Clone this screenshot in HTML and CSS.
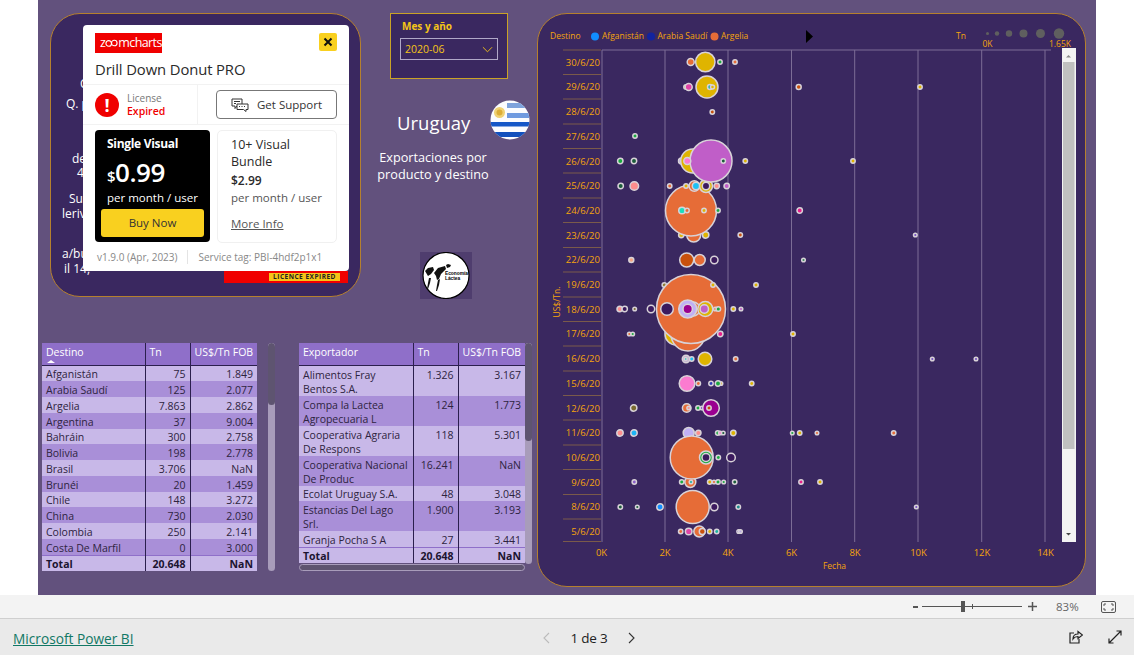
FILE: index.html
```html
<!DOCTYPE html>
<html lang="es">
<head>
    <meta charset="UTF-8">
    <title>Uruguay - Microsoft Power BI</title>
    <link rel="stylesheet" href="styles.css">
</head>
<body>
    <div class="report">
        <div class="left">
            <div class="top">
                <div class="panel info">
                    <div class="intro">
                        <div class="l1">C</div>
                        <div class="l2">Q. p</div>
                        <div class="l3">de</div>
                        <div class="l4">4</div>
                        <div class="l5">Su</div>
                        <div class="l6">leriv</div>
                        <div class="l7">a/bu</div>
                        <div class="l8">il 14,</div>
                    </div>
                    <div class="expired-strip"><span class="expired-tag">LICENCE EXPIRED</span></div>

                    <div class="popup">
                        <div class="popup-head">
                            <div class="logo">z<svg class="logo-gear" viewBox="0 0 14 10"><circle cx="4" cy="5.500" r="3" /><circle cx="10" cy="5" r="3" /></svg>mcharts<span class="logo-cut">S</span></div>
                            <div class="close"><svg viewBox="0 0 10 10"><path d="M1.5 1.5l7 7M8.5 1.5l-7 7" /></svg></div>
                        </div>
                        <div class="popup-title">Drill Down Donut PRO</div>
                        <div class="license-row">
                            <div class="license">
                                <div class="alert">!</div>
                                <div class="license-text">License<br><span class="license-red">Expired</span></div>
                            </div>
                            <div class="support-wrap">
                                <div class="support">
                                    <svg viewBox="0 0 18 14"><path d="M1 1h10v7H6l-2 2.500V8H1z" /><path d="M6 6h11v5.500h-2v2l-2.500-2H6z" /><path d="M3 3.500h6M3 5.500h2M8 8.500h1M10.500 8.500h1M13 8.500h1" /></svg>
                                    Get Support
                                </div>
                            </div>
                        </div>
                        <div class="offers">
                            <div class="offer-black">
                                <div class="offer-name">Single Visual</div>
                                <div class="offer-price"><span class="dollar">$</span>0.99</div>
                                <div class="offer-per">per month / user</div>
                                <div class="buy">Buy Now</div>
                            </div>
                            <div class="offer-white">
                                <div class="bundle-name">10+ Visual<br>Bundle</div>
                                <div class="bundle-price">$2.99</div>
                                <div class="bundle-per">per month / user</div>
                                <div class="more">More Info</div>
                            </div>
                        </div>
                        <div class="popup-foot">
                            <span>v1.9.0 (Apr, 2023)</span>
                            <span class="foot-sep"></span>
                            <span>Service tag: PBI-4hdf2p1x1</span>
                        </div>
                    </div>
                </div>

                <div class="middle">
                    <div class="slicer">
                        <div class="slicer-label">Mes y año</div>
                        <div class="slicer-select">
                            2020-06
                            <svg viewBox="0 0 12 7"><path d="M1 1l5 5 5-5" /></svg>
                        </div>
                    </div>
                    <div class="country">
                        <div class="country-name">Uruguay</div>
                        <svg class="flag" viewBox="0 0 40 40">
                            <defs>
                                <clipPath id="flagClip"><circle cx="20" cy="20" r="19.500" /></clipPath>
                            </defs>
                            <g clip-path="url(#flagClip)">
                                <rect width="40" height="40" fill="#fbfcff" />
                                <rect x="17" y="3" width="23" height="5" fill="#7ea3dc" />
                                <rect x="17" y="13" width="23" height="5" fill="#6f9ae0" />
                                <rect y="22" width="40" height="4.500" fill="#1557c8" />
                                <rect y="32" width="40" height="5" fill="#1250bd" />
                                <circle cx="9.500" cy="12.500" r="5.500" fill="#f0d274" />
                                <circle cx="9.500" cy="12.500" r="3" fill="#dcae38" />
                            </g>
                        </svg>
                    </div>
                    <div class="subtitle">Exportaciones por<br>producto y destino</div>
                    <div class="cow-logo">
                        <svg viewBox="0 0 52 47">
                            <circle cx="26" cy="23.500" r="23" fill="#fff" stroke="#000" stroke-width="1.200" />
                            <path d="M5 19l3-3 5-1 1 3-3 4-3 2z" fill="#111" />
                            <path d="M14 21l4-5 7-2 1 3-5 5-2 5-2 1-1-4z" fill="#111" />
                            <path d="M9 26l2 0-1 5-2 6H7l1-6zM18 28l2-1-1 6-2 6h-1l1-6z" fill="#111" />
                            <path d="M26 13l2-1 3 1-1 2-3 1z" fill="#111" />
                            <text x="25" y="23" class="cow-text">Economía</text>
                            <text x="25" y="28" class="cow-text">Láctea</text>
                        </svg>
                    </div>
                </div>
            </div>

            <div class="tables">
                <div class="table-wrap table-dest">
                    <table class="grid">
                        <tr class="head">
                            <th class="col-dest">Destino<span class="sort"></span></th>
                            <th class="col-tn">Tn</th>
                            <th class="col-fob">US$/Tn FOB</th>
                        </tr>
                        <tr><td>Afganistán</td><td>75</td><td>1.849</td></tr>
                        <tr><td>Arabia Saudí</td><td>125</td><td>2.077</td></tr>
                        <tr><td>Argelia</td><td>7.863</td><td>2.862</td></tr>
                        <tr><td>Argentina</td><td>37</td><td>9.004</td></tr>
                        <tr><td>Bahráin</td><td>300</td><td>2.758</td></tr>
                        <tr><td>Bolivia</td><td>198</td><td>2.778</td></tr>
                        <tr><td>Brasil</td><td>3.706</td><td>NaN</td></tr>
                        <tr><td>Brunéi</td><td>20</td><td>1.459</td></tr>
                        <tr><td>Chile</td><td>148</td><td>3.272</td></tr>
                        <tr><td>China</td><td>730</td><td>2.030</td></tr>
                        <tr><td>Colombia</td><td>250</td><td>2.141</td></tr>
                        <tr><td>Costa De Marfil</td><td>0</td><td>3.000</td></tr>
                        <tr class="total"><td>Total</td><td>20.648</td><td>NaN</td></tr>
                    </table>
                    <div class="vbar"><div class="vthumb thumb-dest"></div></div>
                </div>

                <div class="table-wrap table-exp">
                    <div class="table-col">
                        <table class="grid">
                            <tr class="head">
                                <th class="col-exp">Exportador</th>
                                <th class="col-tn2">Tn</th>
                                <th class="col-fob2">US$/Tn FOB</th>
                            </tr>
                            <tr class="tall"><td>Alimentos Fray<br>Bentos S.A.</td><td>1.326</td><td>3.167</td></tr>
                            <tr class="tall"><td>Compa la Lactea<br>Agropecuaria L</td><td>124</td><td>1.773</td></tr>
                            <tr class="tall"><td>Cooperativa Agraria<br>De Respons</td><td>118</td><td>5.301</td></tr>
                            <tr class="tall"><td>Cooperativa Nacional<br>De Produc</td><td>16.241</td><td>NaN</td></tr>
                            <tr><td>Ecolat Uruguay S.A.</td><td>48</td><td>3.048</td></tr>
                            <tr class="tall"><td>Estancias Del Lago<br>Srl.</td><td>1.900</td><td>3.193</td></tr>
                            <tr><td>Granja Pocha S A</td><td>27</td><td>3.441</td></tr>
                            <tr class="total"><td>Total</td><td>20.648</td><td>NaN</td></tr>
                        </table>
                        <div class="hbar"></div>
                    </div>
                    <div class="vbar vbar-exp"><div class="vthumb thumb-exp"></div></div>
                </div>
            </div>
        </div>

        <div class="panel chart">
            <svg class="chart-svg" viewBox="537 13 549 574">
                <!-- legend -->
                <text x="550" y="39" class="lbl">Destino</text>
                <circle cx="595" cy="36.500" r="4" fill="#118dff" />
                <text x="602" y="39" class="lbl">Afganistán</text>
                <circle cx="651" cy="36.500" r="4" fill="#12239e" />
                <text x="657.500" y="39" class="lbl">Arabia Saudí</text>
                <circle cx="714.500" cy="36.500" r="4" fill="#e66c37" />
                <text x="721" y="39" class="lbl">Argelia</text>
                <path d="M806 30l7 6.500-7 6.500z" fill="#000" />
                <text x="956" y="39" class="lbl">Tn</text>
                <g fill="#5f5f5f">
                    <circle cx="987.500" cy="33.500" r="1.500" />
                    <circle cx="997" cy="33.500" r="2.200" />
                    <circle cx="1009" cy="33.500" r="3.200" />
                    <circle cx="1023.500" cy="33.500" r="4" />
                    <circle cx="1040.500" cy="33.500" r="4.500" />
                    <circle cx="1059" cy="33.500" r="5.200" />
                </g>
                <text x="982.500" y="47" class="lbl">0K</text>
                <text x="1049" y="47" class="lbl">1.65K</text>

                <!-- grid -->
                <g class="gridline">
                    <path d="M602 50V542M665 50V542M728 50V542M791.500 50V542M854.700 50V542M918 50V542M981.700 50V542M1045 50V542M602 50H1051" />
                </g>
                <g class="tick">
                    <path d="M563 50H601M563 74.500H601M563 99H601M563 124H601M563 148.500H601M563 173H601M563 198H601M563 222.500H601M563 247.500H601M563 272H601M563 297H601M563 321.500H601M563 346H601M563 371H601M563 395.500H601M563 420H601M563 445H601M563 469.500H601M563 494.500H601M563 519H601M563 541.500H601" />
                </g>

                <!-- axis -->
                <g class="date">
                    <text x="600" y="65.500">30/6/20</text>
                    <text x="600" y="90">29/6/20</text>
                    <text x="600" y="115">28/6/20</text>
                    <text x="600" y="139.500">27/6/20</text>
                    <text x="600" y="164.500">26/6/20</text>
                    <text x="600" y="189">25/6/20</text>
                    <text x="600" y="213.500">24/6/20</text>
                    <text x="600" y="238.500">23/6/20</text>
                    <text x="600" y="263">22/6/20</text>
                    <text x="600" y="288">19/6/20</text>
                    <text x="600" y="312.500">18/6/20</text>
                    <text x="600" y="337">17/6/20</text>
                    <text x="600" y="362">16/6/20</text>
                    <text x="600" y="386.500">15/6/20</text>
                    <text x="600" y="411.500">12/6/20</text>
                    <text x="600" y="436">11/6/20</text>
                    <text x="600" y="460.500">10/6/20</text>
                    <text x="600" y="485.500">9/6/20</text>
                    <text x="600" y="510">8/6/20</text>
                    <text x="600" y="534.500">5/6/20</text>
                </g>
                <g class="xaxis">
                    <text x="601.500" y="556">0K</text>
                    <text x="665" y="556">2K</text>
                    <text x="728" y="556">4K</text>
                    <text x="791.500" y="556">6K</text>
                    <text x="855" y="556">8K</text>
                    <text x="918.500" y="556">10K</text>
                    <text x="982" y="556">12K</text>
                    <text x="1045.500" y="556">14K</text>
                </g>
                <text x="834.500" y="569" class="lbl-mid">Fecha</text>
                <text transform="translate(560 302) rotate(-90)" class="lbl-mid">US$/Tn.</text>

                <!-- bubbles, rows drawn so the big ones cover their neighbours -->
                <g class="bubbles">
                    <g transform="translate(0 235)">
                        <circle cx="693.700" r="7" fill="#e66c37" />
                        <circle cx="681.300" r="2.700" fill="#dfb400" />
                        <circle cx="705.700" r="3.200" fill="#dfb400" />
                        <circle cx="740.300" r="2.200" fill="#c9510c" />
                        <circle cx="915.300" r="1.800" fill="#744ec2" />
                    </g>
                    <g transform="translate(0 210.500)">
                        <circle cx="691" r="25.500" fill="#e66c37" />
                        <circle cx="682" r="3.300" fill="#1ae0c0" />
                        <circle cx="687" r="2.200" fill="#e66c37" />
                        <circle cx="704" r="2.200" fill="#dfb400" />
                        <circle cx="718" r="2.200" fill="#1aab40" />
                        <circle cx="799.700" r="2.700" fill="#e91e8c" />
                    </g>
                    <g transform="translate(0 186)">
                        <circle cx="620.700" r="2.700" fill="#1a5c3a" />
                        <circle cx="634.300" r="4.300" fill="#fd8d8d" />
                        <circle cx="669.700" r="2.200" fill="#e66c37" />
                        <circle cx="686" r="2.200" fill="#dfb400" />
                        <circle cx="694.300" r="5.200" fill="#e66c37" />
                        <circle cx="696" r="3.700" fill="#1cc1f5" />
                        <circle cx="706" r="6.500" fill="#dfb400" />
                        <circle cx="706" r="3.700" fill="#3b1a5e" />
                        <circle cx="716.700" r="2.700" fill="#fd8d8d" />
                        <circle cx="726.700" r="2.700" fill="#c05ec8" />
                    </g>
                    <g transform="translate(0 161)">
                        <circle cx="620.300" r="2.700" fill="#1aab40" />
                        <circle cx="634" r="2.700" fill="#1a5c3a" />
                        <circle cx="681.500" r="3" fill="#b8a8e0" />
                        <circle cx="692.700" r="12" fill="#dfb400" />
                        <circle cx="711" r="21" fill="#c05ec8" />
                        <circle cx="687.300" r="3.500" fill="#fb7bd0" />
                        <circle cx="723.300" r="2.200" fill="#1a5c3a" />
                        <circle cx="745.300" r="2.200" fill="#dfb400" />
                        <circle cx="853" r="2.200" fill="#dfb400" />
                    </g>
                    <g transform="translate(0 136)">
                        <circle cx="635" r="2.200" fill="#1aab40" />
                    </g>
                    <g transform="translate(0 112)">
                        <circle cx="712.300" r="2.200" fill="#c9510c" />
                    </g>
                    <g transform="translate(0 87)">
                        <circle cx="686" r="2.200" fill="#dfb400" />
                        <circle cx="688.700" r="3.500" fill="#e044a7" />
                        <circle cx="707" r="11" fill="#dfb400" />
                        <circle cx="710" r="2.500" fill="#1ab5a0" />
                        <circle cx="712.500" r="2" fill="#dfb400" />
                        <circle cx="798.700" r="2.500" fill="#c9510c" />
                        <circle cx="920" r="2.200" fill="#dfb400" />
                    </g>
                    <g transform="translate(0 62)">
                        <circle cx="690.700" r="3.500" fill="#e66c37" />
                        <circle cx="705.300" r="9.700" fill="#dfb400" />
                        <circle cx="720" r="2.200" fill="#1aab40" />
                        <circle cx="735" r="2.200" fill="#e66c37" />
                    </g>
                    <g transform="translate(0 260)">
                        <circle cx="631.300" r="2.500" fill="#f4a582" />
                        <circle cx="686.700" r="7" fill="#c9510c" />
                        <circle cx="699.700" r="5.500" fill="#e66c37" />
                        <circle cx="714.300" r="3.700" fill="#3b1a5e" />
                        <circle cx="803.500" r="1.800" fill="#3b8a5c" />
                    </g>
                    <g transform="translate(0 334)">
                        <circle cx="676" r="11" fill="#dfb400" />
                        <circle cx="688" r="17" fill="#e66c37" />
                        <circle cx="629.300" r="1.800" fill="#e66c37" />
                        <circle cx="632.700" r="1.800" fill="#1aab40" />
                        <circle cx="720.300" r="2.700" fill="#e91e8c" />
                        <circle cx="793" r="2.200" fill="#dfb400" />
                    </g>
                    <g transform="translate(0 285)">
                        <circle cx="664.300" r="2.200" fill="#8a7a30" />
                        <circle cx="756" r="2.200" fill="#dfb400" />
                    </g>
                    <g transform="translate(0 309)">
                        <circle cx="691" r="34.500" fill="#e66c37" />
                        <circle cx="713" cy="-24" r="2.200" fill="#dfb400" />
                        <circle cx="619.700" r="2.700" fill="#fd8d8d" />
                        <circle cx="624.700" r="2.700" fill="#3b1a5e" />
                        <circle cx="634.700" r="1.800" fill="#7a6a2f" />
                        <circle cx="651" r="3.700" fill="#3b1a5e" />
                        <circle cx="667" r="6.300" fill="#3b1a5e" />
                        <circle cx="693" r="7" fill="#e66c37" />
                        <circle cx="705.300" r="7.500" fill="#dfb400" />
                        <circle cx="704.300" r="4.200" fill="#c05ec8" />
                        <circle cx="687.700" r="9" fill="#c0b0f5" />
                        <circle cx="687.700" r="4.700" fill="#9a0090" />
                        <circle cx="715.300" r="1.800" fill="#e66c37" />
                        <circle cx="718.300" r="2.300" fill="#1aab40" />
                        <circle cx="733.300" r="2.200" fill="#dfb400" />
                        <circle cx="741" r="1.800" fill="#c05ec8" />
                    </g>
                    <g transform="translate(0 359)">
                        <circle cx="686" r="3.700" fill="#c0b0d0" />
                        <circle cx="685.700" r="1.500" fill="#1cc1c5" />
                        <circle cx="691.700" r="2.200" fill="#1cc1f5" />
                        <circle cx="705" r="6.800" fill="#dfb400" />
                        <circle cx="735.700" r="2.200" fill="#e66c37" />
                        <circle cx="932.300" r="1.800" fill="#744ec2" />
                        <circle cx="976" r="1.800" fill="#744ec2" />
                    </g>
                    <g transform="translate(0 383.500)">
                        <circle cx="687" r="7.800" fill="#fb7bd0" />
                        <circle cx="698.300" r="2.200" fill="#e66c37" />
                        <circle cx="711" r="2.200" fill="#2b3bb5" />
                        <circle cx="721" r="1.800" fill="#dfb400" />
                        <circle cx="718" r="2.700" fill="#1aab40" />
                        <circle cx="751.700" r="2.200" fill="#dfb400" />
                    </g>
                    <g transform="translate(0 408)">
                        <circle cx="633.700" r="3.200" fill="#7a6a2f" />
                        <circle cx="686.700" r="4.300" fill="#e66c37" />
                        <circle cx="688.700" r="1.800" fill="#fd8d8d" />
                        <circle cx="698" r="2.200" fill="#1aab40" />
                        <circle cx="702" r="1.800" fill="#744ec2" />
                        <circle cx="711" r="8.300" fill="#9a0090" />
                        <circle cx="709" r="2.200" fill="#c9510c" />
                    </g>
                    <g transform="translate(0 433)">
                        <circle cx="620" r="3.200" fill="#fd8d8d" />
                        <circle cx="634" r="3.200" fill="#1cb5f5" />
                        <circle cx="688.700" r="5.500" fill="#c0b0f5" />
                        <circle cx="698.300" r="2.700" fill="#fd8d8d" />
                        <circle cx="717.700" r="2.200" fill="#1aab40" />
                        <circle cx="720.300" r="1.800" fill="#fb7bd0" />
                        <circle cx="723.300" r="1.800" fill="#1a5c3a" />
                        <circle cx="733.300" r="2.700" fill="#dfb400" />
                        <circle cx="792.300" r="1.800" fill="#1aab40" />
                        <circle cx="799.700" r="2.200" fill="#dfb400" />
                        <circle cx="817" r="1.800" fill="#e66c37" />
                        <circle cx="893.700" r="2.200" fill="#e66c37" />
                    </g>
                    <g transform="translate(0 482)">
                        <circle cx="634.300" r="2.200" fill="#8a5ec8" />
                        <circle cx="681.700" r="2.200" fill="#1aab40" />
                        <circle cx="690.300" r="5.500" fill="#e66c37" />
                        <circle cx="691" r="1.800" fill="#1ab5a0" />
                        <circle cx="709.700" r="2.200" fill="#dfb400" />
                        <circle cx="714" r="1.800" fill="#e66c37" />
                        <circle cx="718" r="2.200" fill="#1aab40" />
                        <circle cx="723.700" r="1.800" fill="#1aab40" />
                        <circle cx="734.700" r="2.200" fill="#1a5c3a" />
                        <circle cx="801" r="2.200" fill="#e91e8c" />
                        <circle cx="820" r="2.200" fill="#dfb400" />
                    </g>
                    <g transform="translate(0 457.500)">
                        <circle cx="691.700" r="21.500" fill="#e66c37" />
                        <circle cx="706" r="6.500" fill="#1aab40" />
                        <circle cx="706" r="4" fill="#3b1a5e" />
                        <circle cx="718.300" r="2.200" fill="#1aab40" />
                        <circle cx="731" r="4.300" fill="#3b1a5e" />
                    </g>
                    <g transform="translate(0 507)">
                        <circle cx="620.300" r="2.200" fill="#1a5c3a" />
                        <circle cx="637.300" r="1.800" fill="#1a5c3a" />
                        <circle cx="660" r="3.200" fill="#118dff" />
                        <circle cx="692.700" r="16.500" fill="#e66c37" />
                        <circle cx="714.300" r="3.700" fill="#3b1a5e" />
                        <circle cx="738.300" r="2.200" fill="#1a8a8a" />
                        <circle cx="916.300" r="1.800" fill="#744ec2" />
                    </g>
                    <g transform="translate(0 531.500)">
                        <circle cx="680.700" r="2.200" fill="#e66c37" />
                        <circle cx="688.700" r="3.300" fill="#e044a7" />
                        <circle cx="699.300" r="5.500" fill="#e66c37" />
                        <circle cx="702.300" r="3" fill="#c9510c" />
                        <circle cx="709.700" r="2.200" fill="#dfb400" />
                        <circle cx="716.700" r="2.200" fill="#1ab5a0" />
                        <circle cx="738.700" r="1.800" fill="#744ec2" />
                        <circle cx="740.500" r="1.800" fill="#b8a8e0" />
                    </g>
                </g>

                <!-- scrollbar of the plot -->
                <rect x="1062" y="48" width="14" height="494" fill="#f3f3f3" />
                <rect x="1063" y="62" width="11.500" height="387" fill="#c0c0c0" />
                <path d="M1066 57.500h5l-2.500-2.500z" fill="#8a8a8a" />
                <path d="M1066 533h5l-2.500 2.500z" fill="#444" />
            </svg>
        </div>
    </div>

    <div class="zoom-bar">
        <span class="zoom-minus"></span>
        <div class="slider"><span class="slider-thumb"></span><span class="slider-mark"></span></div>
        <svg class="zoom-plus" viewBox="0 0 9 9"><path d="M4.500 0v9M0 4.500h9" /></svg>
        <span class="zoom-value">83%</span>
        <svg class="fit" viewBox="0 0 15 12"><rect x="0.500" y="0.500" width="14" height="11" rx="1.500" /><path d="M3 5V3h2M10 3h2v2M12 7v2h-2M5 9H3V7" /></svg>
    </div>

    <div class="footer">
        <a class="pbi-link" href="#">Microsoft Power BI</a>
        <div class="pager">
            <svg class="chev chev-off" viewBox="0 0 7 12"><path d="M6 1L1 6l5 5" /></svg>
            <span class="page-num">1 de 3</span>
            <svg class="chev" viewBox="0 0 7 12"><path d="M1 1l5 5-5 5" /></svg>
        </div>
        <div class="foot-icons">
            <svg class="foot-icon" viewBox="0 0 14 14"><path d="M5 3H1v10h9V9" /><path d="M4 9c0-3 2-5 5-5V1.500L13.500 5 9 8.500V6.500C7 6.500 5 7.500 4 9z" /></svg>
            <svg class="foot-icon" viewBox="0 0 14 14"><path d="M8.500 1H13v4.500M13 1L1 13M1 8.500V13h4.500" /></svg>
        </div>
    </div>
</body>
</html>
```

FILE: styles.css
```css
* {
    box-sizing: border-box;
}

body {
    margin: 0;
    height: 655px;
    overflow: hidden;
    background: #fff;
    font-family: "Open Sans", sans-serif;
    display: flex;
    flex-direction: column;
}

.report {
    margin-left: 38px;
    width: 1058px;
    height: 595px;
    background: #62517d;
    padding: 13px 10px 8px 4px;
    display: flex;
}

.left {
    width: 495px;
    flex: none;
}

.top {
    display: flex;
    padding-left: 8px;
    height: 284px;
    gap: 29px;
}

.panel {
    background: #3a2860;
    border: 1px solid #b5802e;
    border-radius: 30px;
}

/* left panel */
.info {
    width: 311px;
    height: 284px;
    position: relative;
    color: #fff;
    font-size: 12px;
    line-height: 15px;
}

.intro {
    position: absolute;
    left: 0;
    top: 0;
    white-space: nowrap;
}

.intro div {
    position: absolute;
}

.l1 { left: 29px; top: 62px; }
.l2 { left: 15px; top: 82px; }
.l3 { left: 21px; top: 137px; }
.l4 { left: 26px; top: 151px; }
.l5 { left: 18px; top: 177px; }
.l6 { left: 11px; top: 192px; }
.l7 { left: 11px; top: 232px; }
.l8 { left: 13px; top: 247px; }

.expired-strip {
    position: absolute;
    left: 173px;
    top: 257px;
    width: 124px;
    height: 12px;
    background: #f00000;
}

.expired-tag {
    position: absolute;
    right: 8px;
    top: 2px;
    width: 71px;
    height: 8px;
    background: #f5c518;
    color: #222;
    font-size: 6.5px;
    font-weight: 700;
    line-height: 8px;
    text-align: center;
    letter-spacing: 0.5px;
}

.popup {
    position: absolute;
    left: 32px;
    top: 11px;
    width: 266px;
    height: 246px;
    background: #fff;
    border-radius: 4px;
    color: #2a2a2a;
}

.popup-head {
    display: flex;
    justify-content: space-between;
    padding: 8px 12px 0;
}

.logo {
    width: 67px;
    height: 20px;
    background: #f00000;
    color: #fff;
    font-size: 12.5px;
    line-height: 20px;
    padding-left: 5px;
    overflow: hidden;
    white-space: nowrap;
    letter-spacing: -0.6px;
    display: flex;
}

.logo-gear {
    width: 13px;
    height: 20px;
    fill: none;
    stroke: #fff;
    stroke-width: 1.200;
    flex: none;
}

.logo-cut {
    margin-left: 0;
}

.close {
    width: 18px;
    height: 18px;
    background: #f9d01f;
    border-radius: 2px;
    padding: 4px;
}

.close svg {
    display: block;
    width: 10px;
    height: 10px;
    fill: none;
    stroke: #111;
    stroke-width: 2;
}

.popup-title {
    padding: 7px 12px 0;
    font-size: 14.800px;
    line-height: 19px;
    height: 31px;
    letter-spacing: -0.1px;
}

.license-row {
    display: flex;
    height: 41px;
    border-top: 1px solid #f2f2f2;
    border-bottom: 1px solid #f2f2f2;
}

.license {
    width: 115px;
    border-right: 1px solid #f2f2f2;
    display: flex;
    align-items: center;
    padding-left: 12px;
    gap: 8px;
}

.alert {
    width: 24px;
    height: 24px;
    background: #f00000;
    border-radius: 50%;
    color: #fff;
    font-weight: 700;
    font-size: 18px;
    line-height: 24px;
    text-align: center;
}

.license-text {
    font-size: 10px;
    line-height: 13px;
    color: #777;
}

.license-red {
    color: #f00000;
    font-size: 10.500px;
    font-weight: 600;
}

.support-wrap {
    flex: 1;
    padding: 5px 12px 0 18px;
}

.support {
    height: 29px;
    border: 1px solid #777;
    border-radius: 4px;
    display: flex;
    align-items: center;
    gap: 8px;
    padding-left: 14px;
    font-size: 11.500px;
    color: #333;
}

.support svg {
    width: 18px;
    height: 14px;
    fill: #fff;
    stroke: #333;
    stroke-width: 1;
}

.offers {
    display: flex;
    padding: 5px 12px 0;
    gap: 7px;
}

.offer-black {
    width: 115px;
    height: 112px;
    background: #000;
    border-radius: 4px;
    color: #fff;
    padding: 5px 6px;
}

.offer-name {
    padding-left: 6px;
    font-size: 12px;
    font-weight: 700;
    line-height: 17px;
    letter-spacing: -0.3px;
}

.offer-price {
    padding-left: 6px;
    font-size: 26px;
    font-weight: 600;
    line-height: 33px;
    margin-top: 4px;
    letter-spacing: -0.5px;
}

.dollar {
    font-size: 15px;
}

.offer-per {
    padding-left: 6px;
    font-size: 11.500px;
    line-height: 16px;
    margin-top: -3px;
}

.buy {
    margin-top: 3px;
    height: 28px;
    background: #f9d01f;
    border-radius: 3px;
    color: #333;
    font-size: 11.500px;
    line-height: 28px;
    text-align: center;
}

.offer-white {
    width: 120px;
    height: 113px;
    border: 1px solid #f0f0f0;
    border-radius: 5px;
    padding: 5px 0 0 13px;
}

.bundle-name {
    font-size: 12.500px;
    line-height: 17px;
}

.bundle-price {
    font-size: 12px;
    font-weight: 600;
    line-height: 16px;
    margin-top: 3px;
}

.bundle-per {
    font-size: 11.500px;
    line-height: 16px;
    margin-top: 1px;
    color: #555;
}

.more {
    font-size: 11.500px;
    line-height: 16px;
    margin-top: 10px;
    color: #555;
    text-decoration: underline;
}

.popup-foot {
    display: flex;
    align-items: center;
    gap: 10px;
    padding: 7px 0 0 14px;
    font-size: 10px;
    line-height: 14px;
    color: #888;
}

.foot-sep {
    width: 1px;
    height: 14px;
    background: #e4e4e4;
}

/* middle column */
.middle {
    width: 140px;
    margin-left: 0;
    color: #fff;
    position: relative;
}

.slicer {
    width: 118px;
    height: 66px;
    background: #3a2860;
    border: 1px solid #c9a227;
    padding: 6px 9px;
}

.slicer-label {
    color: #f5c518;
    font-size: 10px;
    font-weight: 700;
    line-height: 13px;
    padding-left: 2px;
}

.slicer-select {
    margin-top: 5px;
    height: 22px;
    border: 1px solid #b0a8c8;
    color: #f5c518;
    font-size: 10.500px;
    line-height: 20px;
    padding: 0 4px;
    display: flex;
    justify-content: space-between;
    align-items: center;
}

.slicer-select svg {
    width: 11px;
    height: 7px;
    fill: none;
    stroke: #f5c518;
    stroke-width: 1;
}

.country {
    display: flex;
    align-items: center;
    margin-top: 21px;
    padding-left: 7px;
    height: 40px;
}

.country-name {
    font-size: 18.500px;
    line-height: 24px;
    width: 93px;
    margin-top: 6px;
}

.flag {
    width: 40px;
    height: 40px;
    flex: none;
}

.subtitle {
    margin-top: 9px;
    font-size: 12.700px;
    line-height: 17px;
    text-align: center;
    white-space: nowrap;
    margin-left: -13px;
    width: 112px;
}

.cow-logo {
    margin-top: 69px;
    margin-left: 30px;
    width: 52px;
    height: 47px;
    background: #4f3d6e;
}

.cow-logo svg {
    display: block;
    width: 52px;
    height: 47px;
}

.cow-text {
    font-size: 4.800px;
    font-weight: 700;
    font-family: "Liberation Sans", sans-serif;
}

/* tables */
.tables {
    display: flex;
    margin-top: 46px;
}

.table-wrap {
    display: flex;
}

.table-dest {
    width: 257px;
    gap: 11px;
}

.table-exp {
    margin-left: 0;
    width: 233px;
}

.table-col {
    width: 226px;
}

.grid {
    border-collapse: collapse;
    table-layout: fixed;
    font-size: 10.500px;
    color: #2e2440;
    white-space: nowrap;
}

.table-dest .grid {
    width: 215px;
}

.table-exp .grid {
    width: 226px;
}

.col-dest { width: 103px; }
.col-tn { width: 45px; }
.col-fob { width: 67px; }
.col-exp { width: 114px; }
.col-tn2 { width: 45px; }
.col-fob2 { width: 67px; }

.grid th {
    height: 22px;
    background: #8f6fc9;
    color: #fff;
    font-weight: 400;
    text-align: left;
    vertical-align: top;
    padding: 2px 4px;
    line-height: 14px;
    border-right: 1px solid #2b1f4d;
    border-bottom: 1px solid #2b1f4d;
    position: relative;
}

.grid th:last-child,
.grid td:last-child {
    border-right: none;
}

.sort {
    position: absolute;
    left: 5px;
    top: 17px;
    border-left: 4px solid transparent;
    border-right: 4px solid transparent;
    border-bottom: 3px solid #fff;
}

.grid td {
    height: 15.700px;
    line-height: 14px;
    padding: 1.700px 4px 0;
    vertical-align: top;
    border-right: 1px solid #2b1f4d;
}

.grid td + td {
    text-align: right;
}

.grid tr:nth-child(even) td {
    background: #c8b8e8;
}

.grid tr:nth-child(odd) td {
    background: #a98fd8;
}

.grid tr.tall td {
    height: 30px;
    padding-top: 2px;
}

.grid tr.total td {
    background: #c8b8e8;
    color: #1c1430;
    font-weight: 700;
    height: 16px;
    padding-top: 1px;
    border-top: 1px solid #8f6fc9;
}

.vbar {
    width: 7px;
    height: 228px;
    background: #a89cba;
    border-radius: 4px;
    overflow: hidden;
}

.vthumb {
    background: #5e5470;
    border-radius: 4px;
}

.thumb-dest {
    height: 62px;
}

.vbar-exp {
    height: 221px;
}

.thumb-exp {
    height: 98px;
}

.hbar {
    height: 7px;
    margin-top: 1px;
    background: #5e5470;
    border: 1px solid #a89cba;
    border-radius: 4px;
}

/* chart */
.chart {
    width: 549px;
    height: 574px;
    flex: none;
    overflow: hidden;
}

.chart-svg {
    display: block;
    width: 549px;
    height: 574px;
    margin: -1px;
    font-family: "Open Sans", sans-serif;
}

.lbl {
    font-size: 8.500px;
    fill: #f5a40c;
}

.lbl-mid {
    font-size: 8.500px;
    fill: #f5a40c;
    text-anchor: middle;
}

.gridline path {
    fill: none;
    stroke: #7c6d96;
    stroke-width: 1;
}

.tick path {
    fill: none;
    stroke: #7a5a4a;
    stroke-width: 1;
}

.date text {
    font-size: 9.500px;
    fill: #f5a40c;
    text-anchor: end;
}

.xaxis text {
    font-size: 9.500px;
    fill: #f5a40c;
    text-anchor: middle;
}

.bubbles circle {
    stroke: #d8d2d8;
    stroke-width: 1.500;
}

/* bottom bars */
.zoom-bar {
    height: 24px;
    background: #f3f3f3;
    border-bottom: 1px solid #cfcfcf;
    display: flex;
    align-items: center;
    padding-left: 913px;
}

.zoom-minus {
    width: 5px;
    height: 2px;
    background: #555;
}

.slider {
    width: 100px;
    height: 1px;
    background: #555;
    margin-left: 4px;
    position: relative;
}

.slider-thumb {
    position: absolute;
    left: 39px;
    top: -5px;
    width: 4px;
    height: 11px;
    background: #555;
}

.slider-mark {
    position: absolute;
    left: 50px;
    top: -2px;
    width: 1px;
    height: 5px;
    background: #555;
}

.zoom-plus {
    width: 9px;
    height: 9px;
    margin-left: 6px;
    stroke: #555;
    stroke-width: 1.500;
}

.zoom-value {
    margin-left: 19px;
    font-size: 11.500px;
    color: #666;
    width: 26px;
}

.fit {
    width: 15px;
    height: 12px;
    margin-left: 19px;
    fill: none;
    stroke: #555;
    stroke-width: 1;
}

.footer {
    height: 36px;
    background: #eaeaea;
    display: flex;
    align-items: center;
    padding-left: 13px;
}

.pbi-link {
    width: 120px;
    font-size: 13.700px;
    color: #117865;
    white-space: nowrap;
    margin-top: 2px;
}

.pager {
    margin-left: 410px;
    display: flex;
    align-items: center;
    width: 92px;
    justify-content: space-between;
    margin-top: 1px;
}

.page-num {
    font-size: 13.500px;
    color: #222;
    letter-spacing: -0.2px;
}

.chev {
    width: 7px;
    height: 12px;
    fill: none;
    stroke: #333;
    stroke-width: 1.100;
}

.chev-off {
    stroke: #bbb;
}

.foot-icons {
    margin-left: 434px;
    display: flex;
    gap: 25px;
}

.foot-icon {
    width: 14px;
    height: 14px;
    fill: none;
    stroke: #222;
    stroke-width: 1.200;
}
```
